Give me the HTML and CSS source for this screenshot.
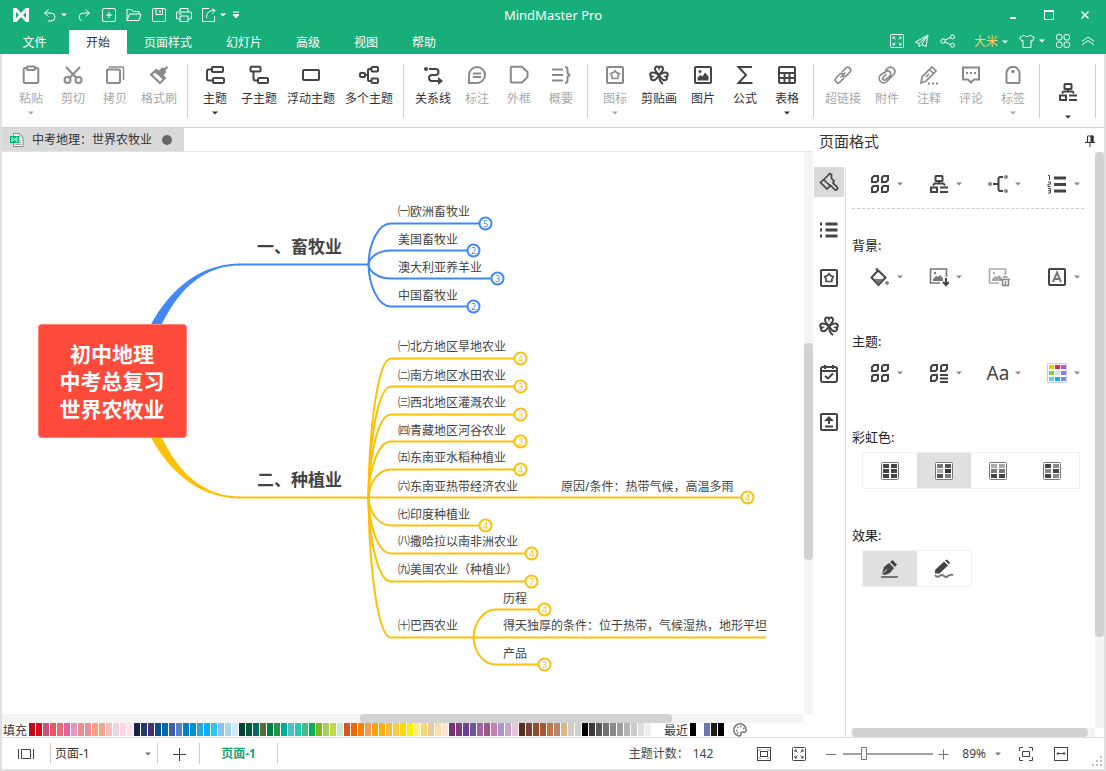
FILE: index.html
```html
<!DOCTYPE html>
<html lang="zh-CN">
<head>
<meta charset="utf-8">
<title>MindMaster Pro</title>
<link rel="stylesheet" href="styles.css">
</head>
<body>
<svg class="sprite" aria-hidden="true">
  <defs>
    <symbol id="caret" viewBox="0 0 6 4"><path d="M0 .5h6L3 3.5z" fill="currentColor" stroke="none"/></symbol>
    <symbol id="logo" viewBox="0 0 16 14"><path fill-rule="evenodd" d="M0 0h3.500L8 5 12.500 0H16v14h-3L8 9l-4.500 5H0zM3 4v6l3-3zM13 4v6l-3-3z" fill="currentColor" stroke="none"/></symbol>
    <symbol id="undo" viewBox="0 0 14 14"><path d="M5.500 1.500 1.500 5l4 3.500M1.500 5H8a4 4 0 0 1 0 8H5"/></symbol>
    <symbol id="redo" viewBox="0 0 14 14"><path d="m8.500 1.500 4 3.500-4 3.500M12.500 5H6a4 4 0 0 0-2.500 7L5 13"/></symbol>
    <symbol id="new" viewBox="0 0 14 14"><rect x=".5" y=".5" width="13" height="13" rx="1.500"/><path d="M7 4v6M4 7h6"/></symbol>
    <symbol id="open" viewBox="0 0 16 14"><path d="M1 12.500v-11h4.500L7 3.500h6v2.500M1 12.500 3.500 6H15l-2 6.500z"/></symbol>
    <symbol id="save" viewBox="0 0 14 14"><rect x=".5" y=".5" width="13" height="13" rx="1"/><path d="M4 .5v6h6.500v-6M8 2v3"/></symbol>
    <symbol id="print" viewBox="0 0 16 14"><path d="M4 4V.5h8V4M3.500 11h-2a1 1 0 0 1-1-1V5a1 1 0 0 1 1-1h13a1 1 0 0 1 1 1v5a1 1 0 0 1-1 1h-2M4 8h8v5.500H4zM2.500 6h3"/></symbol>
    <symbol id="export" viewBox="0 0 14 14"><path d="M7 .5H.5v13h12V8M4.500 10c0-5 2-7.500 8-7.500M10 .5l3 2-2.500 3"/></symbol>
    <symbol id="more" viewBox="0 0 6 8"><path d="M0 1h6M0 3.500h6L3 7z" fill="currentColor"/></symbol>
    <symbol id="min" viewBox="0 0 10 10"><path d="M2 8h6" stroke-width="2"/></symbol>
    <symbol id="max" viewBox="0 0 10 10"><path d="M.5 1h9v8.500h-9z"/><path d="M0 1h10" stroke-width="2"/></symbol>
    <symbol id="close" viewBox="0 0 10 10"><path d="m1.500 1.500 7 7m0-7-7 7" stroke-width="1.500"/></symbol>
    <symbol id="expand" viewBox="0 0 14 14"><rect x=".5" y=".5" width="13" height="13" rx="1"/><path d="M3 5V3h2M3 3l2.500 2.500M9 3h2v2M11 3 8.500 5.500M3 9v2h2M3 11l2.500-2.500M9 11h2V9M11 11 8.500 8.500"/></symbol>
    <symbol id="send" viewBox="0 0 14 14"><path d="M13 1 .5 8l3.500 1.500V13l2.500-2.500 4.500 2zM4 9.500 13 1 6.500 10.500"/></symbol>
    <symbol id="share" viewBox="0 0 16 14"><circle cx="3" cy="7" r="2.200"/><circle cx="12.500" cy="2.800" r="2"/><circle cx="12.500" cy="11.200" r="2"/><path d="m5 6 5.500-2.500M5 8l5.500 2.500"/></symbol>
    <symbol id="shirt" viewBox="0 0 16 14"><path d="M5 1 .8 3.500 2.500 7 4 6.500v7h8v-7l1.500.5 1.700-3.500L11 1c-1 2-5 2-6 0z"/></symbol>
    <symbol id="apps" viewBox="0 0 14 14"><rect x=".5" y=".5" width="5.500" height="5.500" rx="2"/><rect x="8" y=".5" width="5.500" height="5.500" rx="2"/><rect x=".5" y="8" width="5.500" height="5.500" rx="2"/><rect x="8" y="8" width="5.500" height="5.500" rx="2"/></symbol>
    <symbol id="up" viewBox="0 0 14 10"><path d="M1 5.500 7 1l6 4.500M1 9l6-4.500L13 9"/></symbol>
    <symbol id="doc" viewBox="0 0 14 14"><path d="M3.500 .5h6L13 4v9.500H3.500z" fill="#fff" stroke="#888"/><path d="M9.500 .5V4H13M9 7.500h2.500M5 11.500h6.500M9 9.500h2.500" stroke="#aaa"/><rect y="3" width="9" height="7" fill="#00b878" stroke="none"/><path d="M2 8.500v-4l5 4v-4l-5 4" stroke="#fff" stroke-width=".8"/></symbol>

    <symbol id="paste" viewBox="0 0 20 20"><rect x="2.700" y="3" width="14.600" height="15" rx="1.500"/><rect x="6" y="1.500" width="8" height="3.500" rx="1" fill="#fff"/></symbol>
    <symbol id="cut" viewBox="0 0 20 20"><circle cx="4.500" cy="15" r="3"/><circle cx="15.500" cy="15" r="3"/><path d="m3 2 10.500 11M17 2 6.500 13"/></symbol>
    <symbol id="copy" viewBox="0 0 20 20"><rect x="2" y="4.500" width="13" height="13.500" rx="1"/><path d="M4 2h13.500q1 0 1 1V15" stroke-width="1.500"/></symbol>
    <symbol id="brush" viewBox="0 0 20 20"><path d="M2 9.500 7.500 5l8.500 8-5 5z"/><path d="M1 9.500 7 4l3 1.500 3-3L15.500 3 18 1l1 2-2.500 2 .5 2.500-2.500 3 1.500 3-2 1L6 7.500z" fill="currentColor" stroke="none"/></symbol>
    <symbol id="topic" viewBox="0 0 20 20"><rect x="7" y="2" width="11" height="5" rx="1"/><rect x="8" y="13" width="11" height="5" rx="1"/><path d="M7 4.500H3.500q-1.500 0-1.500 2v7q0 2 1.500 2H8"/></symbol>
    <symbol id="subtopic" viewBox="0 0 20 20"><rect x="1.500" y="1.800" width="10" height="4.700" rx="1"/><rect x="9" y="13" width="10" height="5" rx="1"/><path d="M4.500 6.500v7q0 2 2 2H9"/></symbol>
    <symbol id="floating" viewBox="0 0 20 20"><rect x="2" y="5" width="16" height="10" rx="1"/></symbol>
    <symbol id="multi" viewBox="0 0 20 20"><rect x="1" y="8" width="5" height="4" rx="1"/><rect x="12.500" y="2" width="6.500" height="4.500" rx="1"/><rect x="12.500" y="13.500" width="6.500" height="4.500" rx="1"/><path d="M6 10h3M12.500 4H10q-1 0-1 1v10q0 1 1 1h2.500"/></symbol>
    <symbol id="relation" viewBox="0 0 20 20"><circle cx="3" cy="4" r="2" fill="currentColor" stroke="none"/><path d="M6 4h6.500a3 3 0 0 1 0 6H9a3 3 0 0 0 0 6h7"/><path d="m15 12 5 4-5 4z" fill="currentColor" stroke="none"/></symbol>
    <symbol id="callout" viewBox="0 0 20 20"><path d="M2 18V10a8 8 0 1 1 8 8zM6 8.500h8M6 12h8"/></symbol>
    <symbol id="frame" viewBox="0 0 20 20"><path d="M1.800 2.800q0-1 1-1H13L18.500 7v5L13 17.500H2.800q-1 0-1-1z"/></symbol>
    <symbol id="summary" viewBox="0 0 20 20"><path d="M1 4.500h11M1 10h11M1 15.500h11M14 2q2.500 0 2.500 2.500V8l2 2-2 2v3.500Q16.500 18 14 18"/></symbol>
    <symbol id="sticker" viewBox="0 0 20 20"><rect x="2" y="2" width="16" height="16" rx="1"/><path d="m10 5.800 1.500 1.800 2.800 1-1.300 2.200-.2 2.700H7.200L7 10.800 5.700 8.600l2.800-1z" stroke-width="1.700"/></symbol>
    <symbol id="clover" viewBox="0 0 20 20"><g id="leaf"><path d="M10 10C7 7 6 6 6 4c0-3 3.300-3.300 4-1.200.7-2.100 4-1.800 4 1.200 0 2-1 3-4 6z"/></g><use href="#leaf" transform="rotate(-103 10 10)"/><use href="#leaf" transform="rotate(103 10 10)"/><path d="M10 10q0 6 4 9"/></symbol>
    <symbol id="image" viewBox="0 0 20 20"><rect x="2" y="2" width="16" height="16" rx="1"/><path d="M4.500 15.500v-3L7.500 10l2 1.500L12 7.500l3.500 4v4z" fill="currentColor" stroke="none"/><circle cx="7" cy="6.500" r="1.500" fill="currentColor" stroke="none"/></symbol>
    <symbol id="sigma" viewBox="0 0 20 20"><path d="M17 2H3.500l7.500 8-7.500 8h14"/></symbol>
    <symbol id="table" viewBox="0 0 20 20"><rect x="2" y="2" width="16" height="16" rx="1"/><path d="M2 8h16M2 13h16M7.500 8v10M12.500 8v10"/></symbol>
    <symbol id="link" viewBox="0 0 20 20"><path d="m9 7 4.500-4.500q1.500-1 2.800.2l1 1q1.200 1.300.2 2.800L13 11q-1.500 1.200-3 0M11 13l-4.500 4.500q-1.500 1-2.800-.2l-1-1q-1.200-1.300-.2-2.800L7 9q1.500-1.200 3 0M7.500 12.500l5-5" stroke-width="1.700"/></symbol>
    <symbol id="clip" viewBox="0 0 20 20"><path d="m8 6 3-3a4.300 4.300 0 0 1 6 6l-7 7.500a4.600 4.600 0 0 1-6.500 0 4.600 4.600 0 0 1 0-6.500L9 6.500q2.500-1.500 4 .5t0 4L8.500 15q-1.500.5-2.500-.5t0-2l3.500-3.500" stroke-width="1.700"/></symbol>
    <symbol id="note" viewBox="0 0 20 20"><path d="M2 18 3 12 13 2l4 4L7 16zM10.500 4.500l4 4M7 12l3-3" stroke-width="1.700"/><path d="M9 18.500h2M13 18.500h2M17 18.500h2"/></symbol>
    <symbol id="comment" viewBox="0 0 20 20"><path d="M2 2.500h16v12h-5l-3 3-3-3H2z"/><path d="M5 8h2M9 8h2M13 8h2"/></symbol>
    <symbol id="tag" viewBox="0 0 20 20"><path d="M3.500 17V7Q4.500 3.500 8 2h4q3.500 1.500 4.500 5v10q0 1-1 1h-11q-1 0-1-1z"/><circle cx="10" cy="6.500" r="1.800" fill="currentColor" stroke="none"/></symbol>
    <symbol id="layout" viewBox="0 0 20 20"><rect x="6.500" y="2" width="7" height="5" rx=".5"/><path d="M10 7v2.500M4 11.500l1.500-2h9l1.500 2M2 13.500h6v4.500H2zM11 13.500h8M11 18h8"/></symbol>

    <symbol id="pin" viewBox="0 0 10 12"><path d="M2.500 7V1h5.500v6M0 7.500h10M5 7.500V12"/><path d="M6 1h2v6H6z" fill="currentColor"/></symbol>
    <symbol id="paint" viewBox="0 0 20 20"><path d="M1.500 10.500 9.500 3l1-1.500 2 1V6.500l2.500 2.500-1 2 4.500 4.500q.5 2.500-2.500 2.500L11.500 13.500 8 17zM5 8l7 6.500" stroke-width="1.700"/></symbol>
    <symbol id="outline" viewBox="0 0 20 20"><path d="M6.500 4h12M6.500 10h12M6.500 16h12M1 4h2M1 10h2M1 16h2" stroke-width="3"/></symbol>
    <symbol id="task" viewBox="0 0 20 20"><rect x="2" y="3" width="16" height="15" rx="2"/><path d="M2 7h16M6 1v4M14 1v4M6 12l3 2.500 5-5"/></symbol>
    <symbol id="upload" viewBox="0 0 20 20"><rect x="2" y="2" width="16" height="16" rx="1"/><path d="M6 14.500h8M10 12V8M7.500 8 10 5.500 12.500 8z"/></symbol>
    <symbol id="cells" viewBox="0 0 20 20"><path d="M4 2h4v4.500L6.500 8H2V4zM13.500 2H18v4l-2 2h-4V3.500zM3.500 12H8v4l-2 2H2v-4.500zM13.500 12H18v4.500L16.500 18H12v-4.500z"/></symbol>
    <symbol id="cellslines" viewBox="0 0 20 20"><path d="M4 2h4v4.500L6.500 8H2V4zM13.500 2H18v4l-2 2h-4V3.500zM3.500 12H8v4l-2 2H2v-4.500zM11 12h8M11 15.500h8M11 19h8"/></symbol>
    <symbol id="connector" viewBox="0 0 20 20"><path d="M5 10h6M15 3h-2.500q-2 0-2 2v10q0 2 2 2H15"/><g fill="#888" stroke="none"><circle cx="2" cy="10" r="2"/><circle cx="18" cy="3" r="2"/><circle cx="18" cy="17" r="2"/></g></symbol>
    <symbol id="numbers" viewBox="0 0 20 20"><path d="M7 4h12M7 10.500h12M7 17h12" stroke-width="3"/><path d="M1 1.500h1.500V6M1 8h2.500v2.200H1v2.300h2.500M1 14.500h2.500V19H1M1 16.800h2" stroke-width="1"/></symbol>
    <symbol id="bucket" viewBox="0 0 20 20"><path d="m6 1.500 9.500 9-7 7.500-7-7.500 7-7.500"/><path d="M3.500 12h10l-5 5z" fill="#777" stroke="none"/><circle cx="17" cy="16" r="2" fill="#888" stroke="none"/></symbol>
    <symbol id="imgdown" viewBox="0 0 20 20"><path d="M11 16H1.500V2h16v8" stroke="#777" stroke-width="1.600"/><path d="M4 14v-2l3-3 2 1 2-2 3 3v3z" fill="#777" stroke="none"/><circle cx="6" cy="6" r="1.200" fill="#777" stroke="none"/><path d="M17 11v7M14 15l3 3 3-3"/></symbol>
    <symbol id="imgdel" viewBox="0 0 22 20"><path d="M11 16H1.500V2h16v6" stroke-width="1.600"/><path d="M4 14v-2l3-3 2 1 2-2 3 3v3z" fill="currentColor" stroke="none"/><circle cx="6" cy="6" r="1.200" fill="currentColor" stroke="none"/><path d="M12.500 12.500h9.500M15 10h4.500M14.500 13v5.500h6V13M17.500 14v4" stroke="#888" stroke-width="1.500"/></symbol>
    <symbol id="letter" viewBox="0 0 20 20"><rect x="2" y="2" width="16" height="16" rx="1"/><path d="m6 15 4-9.500L14 15M7.500 12h5" stroke="#777"/></symbol>
    <symbol id="pal" viewBox="0 0 20 20"><path d="M.5.500h19v19H.5z" fill="#fff" stroke="#c8cfe0" stroke-width="1"/><g stroke="none"><path d="M2 2h5v4H2z" fill="#f0c400"/><path d="M8 2h5v4H8z" fill="#e02850"/><path d="M14 2h5v4h-5z" fill="#c050d0"/><path d="M2 8h5v4H2z" fill="#78d048"/><path d="M8 8h5v4H8z" fill="#ddd"/><path d="M14 8h5v4h-5z" fill="#9078f0"/><path d="M2 14h5v4H2z" fill="#70c8e0"/><path d="M8 14h5v4H8z" fill="#00b8f8"/><path d="M14 14h5v4h-5z" fill="#7888ff"/></g></symbol>
    <symbol id="gridbox" viewBox="0 0 20 20"><rect x="1.500" y="1.500" width="17" height="17" rx="1" fill="#fff" stroke="#777" stroke-width="1"/></symbol>
    <symbol id="pen" viewBox="0 0 20 20"><g fill="currentColor" stroke="none"><path d="m2 15 2-7 5-4 5 5-4 5-5 2zM10 3l2.500-2 4.500 4.500L15 8z"/></g><path d="M3 14.500 7 10" stroke="#e0e0e0" stroke-width="1"/><path d="M1 18h17" stroke="#777"/></symbol>
    <symbol id="pencil" viewBox="0 0 20 20"><path d="M1 14.500V11L10 2.500l4 4-8.500 8zM11 1.500 13 .5l3 3-1 2z" fill="currentColor" stroke="none"/><path d="M1 16q2 3 4.500 1t4.500 0 4 0 5-1" stroke="#777"/></symbol>

    <symbol id="palette" viewBox="0 0 14 14"><path d="M6 13C2 12 .8 10 .8 7a6.200 6.200 0 0 1 12.400 0c0 2-1 2.500-3 2H9Q7.500 9.500 8 11q0 2-2 2z" stroke-width="1.500"/><path d="M3 7.500h1.500M4 4.500h1.500M7 3.500h1.500M10 5.500h1.500M4 10h1.500" stroke-width="1.500"/></symbol>
    <symbol id="pages" viewBox="0 0 16 12"><path d="M.5 1v10M15.500 1v10M3.500 1.500h9v9h-9z"/></symbol>
    <symbol id="plus" viewBox="0 0 14 14"><path d="M7.500 1v13M1 7.500h13"/></symbol>
    <symbol id="plus-small" viewBox="0 0 12 12"><path d="M5.500 1.500v10M.5 6.500h10"/></symbol>
    <symbol id="minus" viewBox="0 0 14 14"><path d="M2 7.500h10"/></symbol>
    <symbol id="fit" viewBox="0 0 14 14"><rect x=".5" y=".5" width="13" height="13"/><rect x="3.500" y="4.500" width="7" height="5"/><path d="M2 3.500 3.500 2M10.500 2 12 3.500M2 10.500 3.500 12M10.500 12l1.500-1.500"/></symbol>
    <symbol id="focus" viewBox="0 0 14 14"><path d="M.5 4V.5H4M10 .5h3.500V4M.5 10v3.500H4M10 13.500h3.500V10M3.500 4.500h7v5h-7z"/></symbol>
    <symbol id="fitw" viewBox="0 0 14 14"><rect x=".5" y=".5" width="13" height="13"/><path d="M3 6.500h8M4.500 5 3 6.500 4.500 8M9.500 5 11 6.500 9.500 8"/></symbol>
    <symbol id="grip" viewBox="0 0 12 12"><path d="M8 1h2M4 5h2M8 5h2M0 9h2M4 9h2M8 9h2" stroke="#bbb" stroke-width="2"/></symbol>
  </defs>
</svg>

<div class="app">
  <header class="top">
    <div class="titlebar">
      <div class="quick">
        <svg class="i16 logo"><use href="#logo"/></svg>
        <button class="qbtn" aria-label="撤销"><svg class="i14"><use href="#undo"/></svg></button>
        <button class="qcaret" aria-label="撤销列表"><svg class="caret"><use href="#caret"/></svg></button>
        <button class="qbtn" aria-label="恢复"><svg class="i14"><use href="#redo"/></svg></button>
        <button class="qbtn" aria-label="新建"><svg class="i14"><use href="#new"/></svg></button>
        <button class="qbtn" aria-label="打开"><svg class="i16"><use href="#open"/></svg></button>
        <button class="qbtn" aria-label="保存"><svg class="i14"><use href="#save"/></svg></button>
        <button class="qbtn" aria-label="打印"><svg class="i16"><use href="#print"/></svg></button>
        <button class="qbtn" aria-label="导出"><svg class="i14"><use href="#export"/></svg></button>
        <button class="qcaret" aria-label="导出列表"><svg class="caret"><use href="#caret"/></svg></button>
        <button class="qcaret" aria-label="更多"><svg class="more"><use href="#more"/></svg></button>
      </div>
      <h1 class="title">MindMaster Pro</h1>
      <div class="winbtns">
        <button aria-label="最小化"><svg class="i10"><use href="#min"/></svg></button>
        <button aria-label="最大化"><svg class="i10"><use href="#max"/></svg></button>
        <button aria-label="关闭"><svg class="i10"><use href="#close"/></svg></button>
      </div>
    </div>
    <nav class="tabs">
      <button class="tab file">文件</button>
      <button class="tab active">开始</button>
      <button class="tab">页面样式</button>
      <button class="tab">幻灯片</button>
      <button class="tab">高级</button>
      <button class="tab">视图</button>
      <button class="tab">帮助</button>
      <div class="account">
        <button aria-label="全屏"><svg class="i14"><use href="#expand"/></svg></button>
        <button aria-label="发送"><svg class="i14"><use href="#send"/></svg></button>
        <button aria-label="分享"><svg class="i16"><use href="#share"/></svg></button>
        <button class="user">大米<svg class="caret"><use href="#caret"/></svg></button>
        <button class="skin" aria-label="皮肤"><svg class="i16"><use href="#shirt"/></svg><svg class="caret"><use href="#caret"/></svg></button>
        <button aria-label="应用"><svg class="i14"><use href="#apps"/></svg></button>
        <button aria-label="收起"><svg class="up"><use href="#up"/></svg></button>
      </div>
    </nav>
  </header>

  <div class="frame">
    <div class="ribbon">
      <div class="group">
        <button class="cmd" disabled><svg class="i20"><use href="#paste"/></svg>粘贴<svg class="caret"><use href="#caret"/></svg></button>
        <button class="cmd" disabled><svg class="i20"><use href="#cut"/></svg>剪切</button>
        <button class="cmd" disabled><svg class="i20"><use href="#copy"/></svg>拷贝</button>
        <button class="cmd" disabled><svg class="i20"><use href="#brush"/></svg>格式刷</button>
      </div>
      <div class="group">
        <button class="cmd"><svg class="i20"><use href="#topic"/></svg>主题<svg class="caret"><use href="#caret"/></svg></button>
        <button class="cmd"><svg class="i20"><use href="#subtopic"/></svg>子主题</button>
        <button class="cmd"><svg class="i20"><use href="#floating"/></svg>浮动主题</button>
        <button class="cmd"><svg class="i20"><use href="#multi"/></svg>多个主题</button>
      </div>
      <div class="group">
        <button class="cmd"><svg class="i20"><use href="#relation"/></svg>关系线</button>
        <button class="cmd" disabled><svg class="i20"><use href="#callout"/></svg>标注</button>
        <button class="cmd" disabled><svg class="i20"><use href="#frame"/></svg>外框</button>
        <button class="cmd" disabled><svg class="i20"><use href="#summary"/></svg>概要</button>
      </div>
      <div class="group">
        <button class="cmd" disabled><svg class="i20"><use href="#sticker"/></svg>图标<svg class="caret"><use href="#caret"/></svg></button>
        <button class="cmd"><svg class="i20"><use href="#clover"/></svg>剪贴画</button>
        <button class="cmd"><svg class="i20"><use href="#image"/></svg>图片</button>
        <button class="cmd"><svg class="i20"><use href="#sigma"/></svg>公式</button>
        <button class="cmd"><svg class="i20"><use href="#table"/></svg>表格<svg class="caret"><use href="#caret"/></svg></button>
      </div>
      <div class="group">
        <button class="cmd" disabled><svg class="i20"><use href="#link"/></svg>超链接</button>
        <button class="cmd" disabled><svg class="i20"><use href="#clip"/></svg>附件</button>
        <button class="cmd" disabled><svg class="i20"><use href="#note"/></svg>注释</button>
        <button class="cmd" disabled><svg class="i20"><use href="#comment"/></svg>评论</button>
        <button class="cmd" disabled><svg class="i20"><use href="#tag"/></svg>标签<svg class="caret"><use href="#caret"/></svg></button>
      </div>
      <div class="group">
        <button class="cmd tall" aria-label="布局"><svg class="i20"><use href="#layout"/></svg><svg class="caret"><use href="#caret"/></svg></button>
      </div>
    </div>

    <main class="main">
      <section class="work">
        <div class="docs">
          <button class="doctab"><svg class="i14"><use href="#doc"/></svg>中考地理：世界农牧业<span class="dot"></span></button>
        </div>
        <div class="canvasrow">
          <div class="canvas">
            <svg class="map" viewBox="2 152 802 562" width="802" height="562" role="img" aria-label="世界农牧业思维导图">
              <path stroke="none" fill="#4088f5" d="M149 328C172 284 205 263.500 240 263.500v2C207 265.500 180 285 160 328z"/>
              <path stroke="none" fill="#fcc006" d="M149 434C172 478 205 498.500 240 498.500v-2C207 496.500 180 477 160 434z"/>
              <path stroke="#4088f5" stroke-width="2" d="M239 264.500h130"/>
              <path stroke="#fcc006" stroke-width="2" d="M239 497.500h130"/>
              <rect x="38.500" y="324.500" width="148" height="113" rx="3" fill="#fd4a3b" stroke="#fb8076" stroke-width="1"/>
              <g class="root-text">
                <text x="112" y="362">初中地理</text>
                <text x="112" y="389">中考总复习</text>
                <text x="112" y="417">世界农牧业</text>
              </g>
              <g class="head-text">
                <text x="257" y="253">一、畜牧业</text>
                <text x="257" y="486">二、种植业</text>
              </g>
              <g id="topics"></g>
            </svg>
          </div>
          <div class="vtrack"><div class="vthumb"></div></div>
        </div>
        <div class="htrack"><div class="hthumb"></div></div>
        <div class="colors">
          <span class="clabel">填充</span>
          <div class="swatches" id="fill"></div>
          <span class="clabel recent">最近</span>
          <div class="swatches" id="recent"></div>
          <button class="palbtn" aria-label="调色板"><svg class="i14"><use href="#palette"/></svg></button>
        </div>
      </section>

      <aside class="panel">
        <div class="panelhead"><h2>页面格式</h2><button aria-label="固定"><svg class="pin"><use href="#pin"/></svg></button></div>
        <div class="panelbody">
          <div class="side">
            <button class="active" aria-label="页面格式"><svg class="i20"><use href="#paint"/></svg></button>
            <button aria-label="大纲"><svg class="i20"><use href="#outline"/></svg></button>
            <button aria-label="图标"><svg class="i20"><use href="#sticker"/></svg></button>
            <button aria-label="剪贴画"><svg class="i20"><use href="#clover"/></svg></button>
            <button aria-label="任务"><svg class="i20"><use href="#task"/></svg></button>
            <button aria-label="上传"><svg class="i20"><use href="#upload"/></svg></button>
          </div>
          <div class="format">
            <div class="tools ruled">
              <button aria-label="结构"><svg class="i20"><use href="#cells"/></svg><svg class="caret"><use href="#caret"/></svg></button>
              <button aria-label="布局"><svg class="i20"><use href="#layout"/></svg><svg class="caret"><use href="#caret"/></svg></button>
              <button aria-label="连线"><svg class="i20"><use href="#connector"/></svg><svg class="caret"><use href="#caret"/></svg></button>
              <button aria-label="编号"><svg class="i20"><use href="#numbers"/></svg><svg class="caret"><use href="#caret"/></svg></button>
            </div>
            <h3>背景:</h3>
            <div class="tools">
              <button aria-label="填充"><svg class="i20"><use href="#bucket"/></svg><svg class="caret"><use href="#caret"/></svg></button>
              <button aria-label="插入图片"><svg class="i20"><use href="#imgdown"/></svg><svg class="caret"><use href="#caret"/></svg></button>
              <button disabled aria-label="删除图片"><svg class="i22"><use href="#imgdel"/></svg></button>
              <button aria-label="水印"><svg class="i20"><use href="#letter"/></svg><svg class="caret"><use href="#caret"/></svg></button>
            </div>
            <h3>主题:</h3>
            <div class="tools">
              <button aria-label="主题"><svg class="i20"><use href="#cells"/></svg><svg class="caret"><use href="#caret"/></svg></button>
              <button aria-label="主题样式"><svg class="i20"><use href="#cellslines"/></svg><svg class="caret"><use href="#caret"/></svg></button>
              <button aria-label="主题字体"><span class="aa">Aa</span><svg class="caret"><use href="#caret"/></svg></button>
              <button aria-label="主题颜色"><svg class="i20"><use href="#pal"/></svg><svg class="caret"><use href="#caret"/></svg></button>
            </div>
            <h3>彩虹色:</h3>
            <div class="segments">
              <button aria-label="彩虹色1"><svg class="i20" viewBox="0 0 20 20"><use href="#gridbox"/><path fill="#444" stroke="none" d="M3 3h6v4H3zM11 3h6v4h-6zM3 8h6v4H3zM11 8h6v4h-6zM3 13h6v4H3zM11 13h6v4h-6z"/></svg></button>
              <button class="active" aria-label="彩虹色2"><svg class="i20" viewBox="0 0 20 20"><use href="#gridbox"/><g stroke="none"><path fill="#777" d="M3 3h6v4H3zM11 13h6v4h-6z"/><path fill="#555" d="M11 3h6v4h-6zM3 13h6v4H3z"/><path fill="#aaa" d="M3 8h6v4H3z"/><path fill="#333" d="M11 8h6v4h-6z"/></g></svg></button>
              <button aria-label="彩虹色3"><svg class="i20" viewBox="0 0 20 20"><use href="#gridbox"/><g stroke="none"><path fill="#aaa" d="M3 3h6v4H3zM11 3h6v4h-6z"/><path fill="#777" d="M3 8h6v4H3zM11 8h6v4h-6z"/><path fill="#444" d="M3 13h6v4H3zM11 13h6v4h-6z"/></g></svg></button>
              <button aria-label="彩虹色4"><svg class="i20" viewBox="0 0 20 20"><use href="#gridbox"/><g stroke="none"><path fill="#444" d="M3 3h6v4H3zM11 8h6v4h-6zM3 13h6v4H3z"/><path fill="#888" d="M11 3h6v4h-6zM3 8h6v4H3zM11 13h6v4h-6z"/></g></svg></button>
            </div>
            <h3>效果:</h3>
            <div class="segments">
              <button class="active" aria-label="标准"><svg class="i20"><use href="#pen"/></svg></button>
              <button aria-label="手绘"><svg class="i20"><use href="#pencil"/></svg></button>
            </div>
          </div>
        </div>
        <div class="vtrack pv"><div class="vthumb"></div></div>
        <div class="htrack ph"><div class="hthumb"></div></div>
      </aside>
    </main>

    <footer class="status">
      <button class="pagesbtn" aria-label="页面视图"><svg class="pages"><use href="#pages"/></svg></button>
      <label class="pagepick"><select aria-label="页面"><option>页面-1</option></select><svg class="caret"><use href="#caret"/></svg></label>
      <button class="addpage" aria-label="添加页面"><svg class="i14"><use href="#plus"/></svg></button>
      <button class="pagetab">页面-1</button>
      <span class="count">主题计数：</span><span class="num">142</span>
      <div class="zoombar">
        <button aria-label="适合页面"><svg class="i14"><use href="#fit"/></svg></button>
        <button aria-label="全屏"><svg class="i14"><use href="#expand"/></svg></button>
        <div class="zoomer">
          <button class="step" aria-label="缩小"><svg class="i14"><use href="#minus"/></svg></button>
          <input type="range" min="0" max="100" value="21" aria-label="缩放">
          <button class="step" aria-label="放大"><svg class="i12"><use href="#plus-small"/></svg></button>
        </div>
        <button class="pct">89%<svg class="caret"><use href="#caret"/></svg></button>
        <button aria-label="聚焦"><svg class="i14"><use href="#focus"/></svg></button>
        <button aria-label="适合宽度"><svg class="i14"><use href="#fitw"/></svg></button>
        <svg class="grip"><use href="#grip"/></svg>
      </div>
    </footer>
  </div>
</div>
<script src="app.js"></script>
</body>
</html>
```
FILE: styles.css
```css
* { box-sizing: border-box; }
body {
  margin: 0;
  font: 12px/16px "Noto Sans", "Noto Sans CJK SC", sans-serif;
  color: #333;
  background: #fff;
}
button {
  margin: 0; padding: 0; border: 0; background: none;
  font: inherit; color: inherit;
  display: flex; align-items: center; justify-content: center;
}
h1, h2, h3 { margin: 0; font-weight: 400; white-space: nowrap; }
svg { display: block; flex: none; fill: none; stroke: currentColor; }
.sprite { position: absolute; width: 0; height: 0; }
.i10 { width: 10px; height: 10px; }
.i12 { width: 12px; height: 12px; }
.i14 { width: 14px; height: 14px; }
.i16 { width: 16px; height: 14px; }
.i20 { width: 20px; height: 20px; stroke-width: 2; }
.i22 { width: 22px; height: 20px; stroke-width: 2; }
.caret { width: 6px; height: 4px; }
.more { width: 6px; height: 8px; }
.up { width: 14px; height: 10px; }

.app { min-height: 100vh; display: flex; flex-direction: column; }
.top { background: #17ae79; color: #fff; }
.titlebar { height: 30px; display: grid; grid-template-columns: 1fr auto 1fr; align-items: center; }
.quick { display: flex; align-items: center; padding-left: 13px; }
.logo { margin-right: 8px; }
.qbtn { width: 25px; height: 24px; }
.qcaret { width: 15px; height: 24px; }
.qbtn + .qcaret { width: 10px; margin-left: -3px; }
.qcaret + .qbtn { margin-left: 2px; }
.title { font-size: 13px; line-height: 18px; }
.winbtns { display: flex; justify-content: flex-end; padding-right: 3px; }
.winbtns button { width: 36px; height: 26px; }

.tabs { display: flex; height: 24px; }
.tab { padding: 2px 17px 0; }
.tab.file { width: 69px; }
.tab.active { background: #fff; color: #333; }
.account { margin-left: auto; display: flex; align-items: center; gap: 11px; padding: 0 11px 2px 0; }
.account button { height: 22px; gap: 4px; }
.account .user { color: #f5d060; margin-left: 7px; padding-top: 2px; }
.user .caret { color: #fff; }

.frame {
  flex: 1; display: flex; flex-direction: column;
  border: 2px solid #e0e0e0; border-top: 0;
}
.ribbon { display: flex; height: 74px; border-bottom: 1px solid #d0d0d0; padding: 10px 0 9px 8px; }
.group { display: flex; padding-right: 5px; margin-right: 6px; border-right: 1px solid #d0d0d0; }
.cmd {
  min-width: 42px; padding: 1px 5px 0; flex-direction: column;
  justify-content: flex-start; line-height: 18px;
}
.cmd .i20 { margin-bottom: 5px; color: #444; }
.cmd .caret { margin-top: 3px; }
.cmd:disabled { color: #a8a8a8; }
.cmd:disabled .i20 { color: #8a8a8a; }
.cmd.tall { width: 44px; padding-top: 18px; }
.cmd.tall .caret { margin-top: 8px; }

.main { flex: 1; display: grid; grid-template-columns: minmax(0, 1fr) 291px; border-bottom: 1px solid #dcdcdc; }
.work { display: flex; flex-direction: column; min-width: 0; }
.docs { height: 24px; border-bottom: 1px solid #e4e4e4; display: flex; }
.doctab { background: #d9d9d9; padding: 0 12px 0 8px; gap: 8px; }
.dot { width: 10px; height: 10px; border-radius: 50%; background: #666; margin-left: 2px; }
.canvasrow { flex: 1; display: flex; }
.canvas { flex: 1; min-width: 0; overflow: hidden; }
.vtrack { width: 9px; background: #f4f4f4; }
.vthumb { width: 9px; background: #d2d2d2; border-radius: 4px; }
.canvasrow .vthumb { height: 217px; margin-top: 191px; }
.htrack { height: 9px; background: #f4f4f4; margin-right: 9px; }
.hthumb { height: 9px; background: #d2d2d2; border-radius: 4px; width: 312px; margin-left: 358px; }

.root-text text { font-size: 21px; font-weight: 700; fill: #fff; stroke: none; text-anchor: middle; }
.head-text text { font-size: 17px; font-weight: 700; fill: #444; stroke: none; }
.topic { font-size: 12px; fill: #444; stroke: none; }
.badge { font-size: 9px; text-anchor: middle; }
.blue { stroke: #4088f5; fill: none; stroke-width: 2; }
.gold { stroke: #fcc006; fill: none; stroke-width: 2; }
.blue.badge { fill: #4088f5; stroke: none; }
.gold.badge { fill: #fcc006; stroke: none; }
.gold.disc, .blue.disc { fill: #fff; }

.colors { display: flex; height: 14px; }
.clabel { width: 27px; padding-left: 1px; line-height: 16px; white-space: nowrap; }
.recent { margin-left: 12px; }
.swatches { display: flex; gap: 1px; }
.swatch { width: 6px; height: 13px; }
.palbtn { margin-left: 9px; color: #777; }

.panel {
  display: grid; grid-template-columns: minmax(0, 1fr) 9px;
  grid-template-rows: 24px 1fr 9px;
}
.panelhead {
  grid-column: 1 / -1; grid-row: 1;
  display: flex; justify-content: space-between; align-items: center; padding: 1px 9px 0 6px;
}
.panelhead h2 { font-size: 15px; line-height: 22px; }
.pin { width: 10px; height: 12px; }
.panelbody { display: flex; padding-top: 15px; grid-column: 1; grid-row: 2 / 4; }
.side { flex: none; display: flex; flex-direction: column; gap: 18px; width: 33px; padding-left: 1px; border-right: 1px solid #dcdcdc; color: #444; }
.side button { width: 30px; height: 30px; }
.side .active { background: #d9d9d9; }
.format { flex: 1; min-width: 0; padding-left: 6px; color: #444; }
.format h3 { font-size: 13px; line-height: 20px; margin-bottom: 5px; color: #222; }
.tools { display: grid; grid-template-columns: repeat(4, 59px); height: 34px; padding-left: 18px; margin-bottom: 37px; }
.tools button { justify-content: flex-start; gap: 7px; }
.tools .caret { color: #888; }
.tools button:disabled { color: #aaa; }
.ruled { height: 42px; padding-bottom: 7px; margin: 0 11px 26px 0; border-bottom: 1px dashed #ccc; }
.aa { font-size: 19px; width: 24px; margin: 0 -2px; }
.segments { display: flex; width: fit-content; border: 1px solid #f0f0f0; margin: 0 0 36px 10px; }
.segments button { width: 54px; height: 35px; }
.segments .active { background: #e0e0e0; }
.pv { grid-column: 2; grid-row: 2; }
.pv .vthumb { height: 485px; }
.ph { grid-column: 1; grid-row: 3; margin: 0 0 0 38px; z-index: 1; }
.ph .hthumb { width: 236px; margin-left: 1px; }

.status { display: flex; height: 31px; padding: 5px 0; line-height: 22px; color: #444; }
.status > button, .pagepick { border-right: 1px solid #ccc; height: 21px; }
.pagesbtn { width: 49px; }
.pages { width: 16px; height: 12px; }
.pagepick { display: flex; align-items: center; width: 107px; padding-right: 6px; }
.pagepick select { appearance: none; flex: 1; min-width: 0; border: 0; background: none; font: inherit; color: #333; padding: 0 0 0 4px; }
.pagepick .caret { color: #777; }
.addpage { width: 42px; }
.status .pagetab { width: 78px; color: #17a070; font-weight: 700; }
.count { margin-left: auto; }
.num { margin-left: 4px; }
.zoombar { display: flex; align-items: center; margin-left: 44px; gap: 21px; }
.zoomer { display: flex; align-items: center; gap: 5px; margin: 0 -9px 0 -3px; color: #777; }
.zoomer input { appearance: none; width: 90px; height: 14px; margin: 0; background: linear-gradient(#a0a0a0, #a0a0a0) center / 100% 2px no-repeat; }
.zoomer input::-webkit-slider-thumb { appearance: none; width: 6px; height: 13px; background: #fff; border: 1px solid #777; }
.pct { gap: 9px; margin-right: -3px; }
.pct .caret { color: #777; }
.grip { width: 12px; height: 12px; align-self: flex-end; margin: 0 0 -4px 3px; }
```
FILE: app.js
```javascript
const fills = ("b70f1c d90b1f c9517c e95365 ea6d74 e85f9f df98bf ef8a8d f08f9c ff9f7a f0a78f f6bebd ead4e8 ffd5e6 ffe1e8 " +
  "132450 203a70 472f7b 005395 006aab 3d60ad 5484c4 0080cc 0090d5 2ea7e0 00b4f1 2dc5f7 8ac0ea a3d9ef d0ebf7 " +
  "004437 005d33 006b62 586f31 007d4a 22963e 00ad97 53bdc1 1dceae 47bb83 00b359 7fba12 a4cf5e c1d944 cce7cf " +
  "e24f21 eb6a00 f28400 f39c58 f5a400 ffb006 fdb840 facb3a ffd800 fff000 fff07e fcd471 e8cb98 ffddaa fde9d5 " +
  "7a2f6f 823980 6b3f97 765394 9b67a1 a35487 cc7eb1 a895cd c9a5ca ecc1da " +
  "592d20 7c3f33 8f4e2a a9562a be773f b5866d deb682 d3cdc8 c9d4ca " +
  "000000 403837 595857 727171 898989 9e9e9f b5b5b6 c9caca dcdddd efefef").split(" ");
const recents = "000000 ffffff 6d76b5 1d1d1d 000000".split(" ");

function fillSwatches(id, list) {
  document.getElementById(id).innerHTML =
    list.map(c => `<span class="swatch" style="background:#${c}"></span>`).join("");
}
fillSwatches("fill", fills);
fillSwatches("recent", recents);

// label, text x, text baseline, line y, line end, badge, colour, branch origin
const topics = [
  ["㈠欧洲畜牧业", 398, 216, 223, 485, 5, "blue", 368, 264],
  ["美国畜牧业", 398, 244, 250, 473, 2, "blue", 368, 264],
  ["澳大利亚养羊业", 398, 272, 278, 497, 3, "blue", 368, 264],
  ["中国畜牧业", 398, 300, 306, 473, 2, "blue", 368, 264],
  ["㈠北方地区旱地农业", 398, 351, 358, 520, 4, "gold", 368, 497],
  ["㈡南方地区水田农业", 398, 380, 386, 520, 3, "gold", 368, 497],
  ["㈢西北地区灌溉农业", 398, 407, 414, 520, 3, "gold", 368, 497],
  ["㈣青藏地区河谷农业", 398, 435, 441, 520, 3, "gold", 368, 497],
  ["㈤东南亚水稻种植业", 398, 462, 469, 520, 4, "gold", 368, 497],
  ["㈥东南亚热带经济农业", 398, 491, 497, 531, "", "gold", 368, 497],
  ["原因/条件：热带气候，高温多雨", 561, 491, 497, 747, 4, "gold", 530, 497],
  ["㈦印度种植业", 398, 519, 525, 485, 4, "gold", 368, 497],
  ["㈧撒哈拉以南非洲农业", 398, 546, 553, 531, 4, "gold", 368, 497],
  ["㈨美国农业（种植业）", 398, 574, 581, 531, 7, "gold", 368, 497],
  ["㈩巴西农业", 398, 630, 637, 474, "", "gold", 368, 497],
  ["历程", 503, 603, 609, 544, 4, "gold", 473, 637],
  ["得天独厚的条件：位于热带，气候湿热，地形平坦", 503, 630, 637, 766, "", "gold", 473, 637],
  ["产品", 503, 658, 664, 544, 3, "gold", 473, 637]
];

document.getElementById("topics").innerHTML = topics.map(([label, x, base, y, end, badge, tone, ox, oy]) => {
  const bend = ox + 23;
  const ly = y + 0.5, sy = oy + 0.5;
  const curve = y === oy
    ? `M${ox} ${ly}H${end}`
    : `M${ox + 0.5} ${sy}C${ox + 1} ${(sy + ly) / 2} ${ox + 10} ${ly} ${bend} ${ly}H${end}`;
  const disc = badge === "" ? "" :
    `<circle class="${tone} disc" cx="${end + 0.5}" cy="${ly}" r="6"/>` +
    `<text class="${tone} badge" x="${end + 0.5}" y="${y + 4}">${badge}</text>`;
  return `<path class="${tone}" d="${curve}"/>${disc}<text class="topic" x="${x}" y="${base}">${label}</text>`;
}).join("");
```
